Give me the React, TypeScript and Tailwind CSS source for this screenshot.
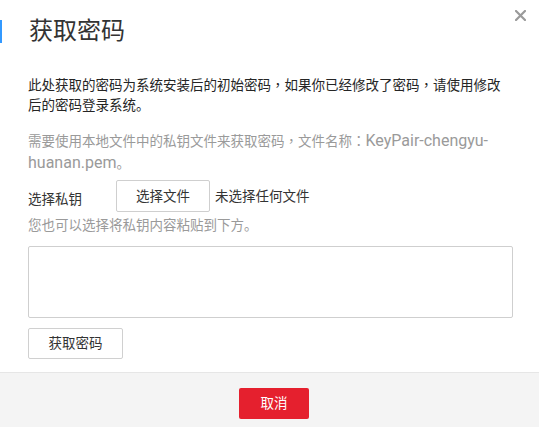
import React from 'react'

// Key pair password dialog: "获取密码"
function P({ c }: { c: string }) {
  // centred full-width punctuation
  return <span style={{ fontFamily: '"Noto Sans CJK TC", sans-serif' }}>{c}</span>
}

export default function App() {
  return (
    <div
      className="relative w-[539px] h-[427px] overflow-hidden bg-white text-[13.5px] text-[#333]"
      style={{ fontFamily: 'Roboto, "Noto Sans CJK SC", sans-serif' }}
    >
      {/* close */}
      <button className="absolute top-[10px] right-[13px] w-[11px] h-[11px]">
        <svg viewBox="0 0 11 11" width="11" height="11">
          <path d="M1 1L10 10M10 1L1 10" stroke="#9a9a9a" strokeWidth="2.2" strokeLinecap="square" />
        </svg>
      </button>

      {/* title */}
      <div className="mt-[20px] flex items-center h-[23px]">
        <div className="w-[2px] h-[23px] bg-[#3399ff]" />
        <span className="ml-[27px] text-[24px] leading-[23px] text-[#333]">获取密码</span>
      </div>

      <div className="pl-[28px] pr-[26px]">
        <p className="mt-[31px] leading-[20px] text-[#252525]">
          此处获取的密码为系统安装后的初始密码<P c="，" />如果你已经修改了密码<P c="，" />请使用修改后的密码登录系统。
        </p>
        <p className="mt-[14px] h-[44px] leading-[22px] text-[#9a9a9a]">
          需要使用本地文件中的私钥文件来获取密码<P c="，" />文件名称<P c="：" />
          <span className="text-[16px] leading-[14px]">KeyPair-chengyu-huanan.pem</span>。
        </p>

        <div className="mt-[7px] flex items-center h-[32px]">
          <span className="w-[88px] pt-[6px]">选择私钥</span>
          <button className="w-[94px] h-[32px] border border-[#cfcfcf] rounded-[2px] bg-white text-[#333]">
            选择文件
          </button>
          <span className="ml-[5px]">未选择任何文件</span>
        </div>

        <p className="mt-[3px] leading-[20px] text-[#9a9a9a]">您也可以选择将私钥内容粘贴到下方。</p>

        <textarea className="mt-[11px] block w-[485px] h-[72px] border border-[#cfcfcf] rounded-[2px] resize-none outline-none" />

        <button className="mt-[10px] block w-[95px] h-[31px] border border-[#d0d0d0] rounded-[2px] bg-white text-[#333]">
          获取密码
        </button>
      </div>

      {/* footer */}
      <div className="mt-[13px] h-[55px] border-t border-[#e6e6e6] bg-[#f4f4f4] flex justify-center pl-[9px] pt-[15px]">
        <button className="w-[70px] h-[31px] rounded-[2px] bg-[#e5202e] text-white">取消</button>
      </div>
    </div>
  )
}
